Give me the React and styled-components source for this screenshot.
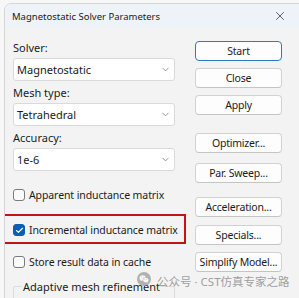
import React from 'react';
import styled, { createGlobalStyle } from 'styled-components';
import { ChevronDown, X, Check } from 'lucide-react';
import { RiWechatFill } from 'react-icons/ri';

const GlobalStyle = createGlobalStyle`
  html, body {
    margin: 0;
    padding: 0;
    background: #f7f7f7;
    overflow: hidden;
  }
  body {
    font-family: "Noto Sans", "Open Sans", sans-serif;
    color: #1b1b1b;
    white-space: nowrap;
  }
`;

const Page = styled.div`
  position: relative;
  width: 299px;
  height: 298px;
  overflow: hidden;
  padding: 3px 0 0 4px;
  box-sizing: border-box;
`;

const Dialog = styled.div`
  width: 330px;
  height: 330px;
  border: 1px solid #d6d6d6;
  border-radius: 7px 0 0 0;
  background: #f3f3f3;
  overflow: hidden;
`;

const TitleBar = styled.div`
  height: 24px;
  background: #eef3f9;
  display: flex;
  align-items: center;
  padding-left: 7px;
  font-size: 9.5px;
  color: #1a1a1a;
`;

const Title = styled.span`
  flex: 1;
`;

const CloseIcon = styled.span`
  display: flex;
  width: 16px;
  justify-content: center;
  margin-right: 47px;
  color: #222;
`;

const Content = styled.div`
  display: flex;
  gap: 20px;
  padding: 13px 0 0 8px;
`;

const LeftColumn = styled.div`
  width: 162px;
  display: flex;
  flex-direction: column;
`;

const Field = styled.div`
  display: flex;
  flex-direction: column;
  gap: 3px;
  margin-top: ${(p) => p.$mt || 0}px;
`;

const Label = styled.div`
  font-size: 11px;
  line-height: 14px;
  height: 14px;
`;

const Combo = styled.div`
  height: 23px;
  box-sizing: border-box;
  background: #ffffff;
  border: 1px solid #dadada;
  border-radius: 3px;
  display: flex;
  align-items: center;
  justify-content: space-between;
  padding: 0 3px 0 3px;
  font-size: 11px;
  color: #1a1a1a;
`;

const Chevron = styled(ChevronDown)`
  color: #6a6a6a;
`;

const CheckRow = styled.div`
  position: relative;
  display: flex;
  align-items: center;
  gap: 4px;
  height: 16px;
  font-size: 10.5px;
  letter-spacing: -0.1px;
  margin-top: ${(p) => p.$mt || 0}px;
`;

const Box = styled.span`
  flex: none;
  width: 12px;
  height: 12px;
  box-sizing: border-box;
  border-radius: 3px;
  border: 1px solid ${(p) => (p.$checked ? '#0a5fb4' : '#7a7a7a')};
  background: ${(p) => (p.$checked ? '#0a5fb4' : '#fbfbfb')};
  display: flex;
  align-items: center;
  justify-content: center;
  color: #fff;
`;

const Highlight = styled.div`
  position: absolute;
  left: -12px;
  right: -11px;
  top: -8px;
  bottom: -6px;
  border: 2px solid #c2121c;
  pointer-events: none;
`;

const Group = styled.fieldset`
  margin: 9px 0 0 0;
  padding: 0;
  height: 40px;
  border: 1px solid #dcdcdc;
  border-radius: 2px;
`;

const Legend = styled.legend`
  font-size: 11px;
  padding: 0 1px;
  margin-left: 8px;
`;

const RightColumn = styled.div`
  width: 87px;
  display: flex;
  flex-direction: column;
`;

const Button = styled.div`
  height: 20px;
  box-sizing: border-box;
  margin-top: ${(p) => p.$mt || 0}px;
  border: 1px solid ${(p) => (p.$primary ? '#2f78c4' : '#d2d2d2')};
  border-bottom-color: ${(p) => (p.$primary ? '#2f78c4' : '#c4c4c4')};
  border-radius: 4px;
  background: #fdfdfd;
  display: flex;
  align-items: center;
  justify-content: center;
  font-size: 10.5px;
  letter-spacing: -0.2px;
  color: #1b1b1b;
`;

const Watermark = styled.div`
  position: absolute;
  left: 137px;
  top: 273px;
  display: flex;
  align-items: center;
  gap: 6px;
  color: rgba(140, 140, 140, 0.85);
  font-family: "Noto Sans", "Noto Sans CJK SC", sans-serif;
  font-size: 11.5px;
`;

const WeIcon = styled.span`
  width: 14px;
  height: 14px;
  border-radius: 50%;
  background: rgba(160, 160, 160, 0.8);
  display: flex;
  align-items: center;
  justify-content: center;
  color: rgba(255, 255, 255, 0.9);
  margin-top: -5px;
`;

const fields = [
  { label: 'Solver:', value: 'Magnetostatic', mt: 0 },
  { label: 'Mesh type:', value: 'Tetrahedral', mt: 5 },
  { label: 'Accuracy:', value: '1e-6', mt: 5 },
];

const buttons = [
  { text: 'Start', mt: 0, primary: true },
  { text: 'Close', mt: 7 },
  { text: 'Apply', mt: 7 },
  { text: 'Optimizer...', mt: 18 },
  { text: 'Par. Sweep...', mt: 10 },
  { text: 'Acceleration...', mt: 14 },
  { text: 'Specials...', mt: 8 },
  { text: 'Simplify Model...', mt: 7 },
];

export default function App() {
  return (
    <>
      <GlobalStyle />
      <Page>
        <Dialog>
          <TitleBar>
            <Title>Magnetostatic Solver Parameters</Title>
            <CloseIcon>
              <X size={14} strokeWidth={1.2} />
            </CloseIcon>
          </TitleBar>
          <Content>
            <LeftColumn>
              {fields.map((f) => (
                <Field key={f.label} $mt={f.mt}>
                  <Label>{f.label}</Label>
                  <Combo>
                    {f.value}
                    <Chevron size={11} strokeWidth={1.5} />
                  </Combo>
                </Field>
              ))}
              <CheckRow $mt={16}>
                <Box />
                Apparent inductance matrix
              </CheckRow>
              <CheckRow $mt={19}>
                <Box $checked>
                  <Check size={9} strokeWidth={3} />
                </Box>
                Incremental inductance matrix
                <Highlight />
              </CheckRow>
              <CheckRow $mt={16}>
                <Box />
                Store result data in cache
              </CheckRow>
              <Group>
                <Legend>Adaptive mesh refinement</Legend>
              </Group>
            </LeftColumn>
            <RightColumn>
              {buttons.map((b) => (
                <Button key={b.text} $mt={b.mt} $primary={b.primary}>
                  {b.text}
                </Button>
              ))}
            </RightColumn>
          </Content>
        </Dialog>
        <Watermark>
          <WeIcon>
            <RiWechatFill size={10} />
          </WeIcon>
          公众号 · CST仿真专家之路
        </Watermark>
      </Page>
    </>
  );
}
